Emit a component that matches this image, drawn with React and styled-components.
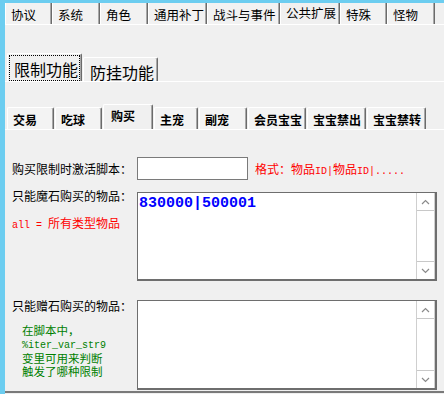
import React from 'react';
import styled, { createGlobalStyle } from 'styled-components';

const CJK = '"Noto Sans CJK SC", "Noto Sans", sans-serif';
const MONO = '"Liberation Mono", "Noto Sans CJK SC", monospace';

const GlobalStyle = createGlobalStyle`
  html, body {
    margin: 0;
    padding: 0;
    background: #f0f0f0;
  }
  body {
    font-family: ${CJK};
    font-size: 12px;
    color: #000;
  }
`;

const Frame = styled.div`
  width: 444px;
  height: 394px;
  box-sizing: border-box;
  padding: 3px 0 0 5px;
  background: #6ccdf0;
  display: flex;
  overflow: hidden;
`;

const Panel = styled.div`
  flex: 1;
  display: flex;
  flex-direction: column;
  background: #f0f0f0;
`;

/* ---------- tab strips ---------- */

const TopStrip = styled.div`
  display: flex;
  height: 21px;
  border-bottom: 1px solid #ffffff;
`;

const TopTab = styled.div`
  width: ${p => p.$w}px;
  box-sizing: border-box;
  height: 21px;
  padding: ${p => (p.$active ? '3px' : '5px')} 0 0 5px;
  line-height: 13px;
  font-size: 12.5px;
  white-space: nowrap;
  background: ${p => (p.$active ? '#f0f0f0' : '#f2f2f2')};
  border-left: 1px solid #ffffff;
  border-right: 1px solid #6b6b6b;
  box-shadow: inset -1px 0 #a8a8a8;
`;

const Strip = styled.div`
  display: flex;
  align-items: flex-end;
  gap: 1px;
  padding-left: 2px;
  margin-top: ${p => p.$top}px;
  border-bottom: 1px solid #ffffff;
`;

const BigTab = styled.div`
  width: ${p => p.$w}px;
  box-sizing: border-box;
  height: ${p => (p.$active ? 28 : 24)}px;
  padding: 1px 1px 0 1px;
  font-size: 16px;
  white-space: nowrap;
  border-left: 1px solid #ffffff;
  border-top: 1px solid #ffffff;
  border-right: 1px solid #6b6b6b;
  box-shadow: inset -1px 0 #a8a8a8;
  border-radius: 2px 2px 0 0;
`;

const FocusBox = styled.div`
  height: 100%;
  box-sizing: border-box;
  padding: ${p => (p.$active ? '3px' : '2px')} 0 0 4px;
  line-height: 20px;
  border: 1px dotted ${p => (p.$active ? '#000' : 'transparent')};
`;

const SmallTab = styled.div`
  width: ${p => p.$w}px;
  box-sizing: border-box;
  height: ${p => (p.$active ? 25 : 22)}px;
  padding: ${p => (p.$active ? '4px 0 0 7px' : '5px 0 0 5px')};
  line-height: 13px;
  font-size: 12px;
  font-weight: 700;
  white-space: nowrap;
  background: ${p => (p.$active ? '#f0f0f0' : '#f3f3f3')};
  border-left: 1px solid #ffffff;
  border-top: 1px solid #ffffff;
  border-right: 1px solid #6b6b6b;
  box-shadow: inset -1px 0 #a8a8a8;
  border-radius: 2px 2px 0 0;
`;

/* ---------- form ---------- */

const Form = styled.div`
  flex: 1;
  display: flex;
  flex-direction: column;
  padding: 27px 7px 1px 7px;
  border-bottom: 2px solid #7a7a7a;
  margin-bottom: 1px;
`;

const Row = styled.div`
  display: flex;
  align-items: ${p => (p.$center ? 'center' : 'flex-start')};
  margin-top: ${p => p.$top || 0}px;
`;

const LabelCol = styled.div`
  width: 125px;
  flex: none;
  display: flex;
  flex-direction: column;
`;

const Label = styled.div`
  line-height: 13px;
  white-space: nowrap;
  margin-top: ${p => p.$shift || 0}px;
`;

const Note = styled.div`
  color: ${p => p.$color};
  font-size: ${p => p.$size || 12}px;
  line-height: ${p => p.$lh || 13}px;
  margin-top: ${p => p.$top}px;
  padding-left: ${p => p.$indent || 0}px;
  white-space: nowrap;
`;

const Mono = styled.span`
  font-family: ${MONO};
  font-size: 10px;
`;

const Input = styled.div`
  width: 111px;
  height: 23px;
  box-sizing: border-box;
  background: #fff;
  border: 1px solid #7a7a7a;
`;

const Hint = styled.div`
  margin-left: 7px;
  color: #ff0000;
  white-space: nowrap;
`;

const Memo = styled.div`
  width: 300px;
  height: ${p => p.$h}px;
  box-sizing: border-box;
  background: #fff;
  border: 1px solid #6e6e6e;
  border-right-width: 2px;
  border-bottom-width: 2px;
  display: flex;
`;

const MemoText = styled.div`
  flex: 1;
  padding: 2px 0 0 1px;
  font-family: ${MONO};
  font-weight: 700;
  font-size: 15px;
  line-height: 18px;
  color: #0000ff;
`;

const Scroll = styled.div`
  width: 17px;
  display: flex;
  flex-direction: column;
  justify-content: space-between;
  border-left: 1px solid #cfcfcf;
  border-right: 1px solid #cfcfcf;
  background: #fff;
`;

const ArrowBtn = styled.div`
  height: 17px;
  display: flex;
  align-items: center;
  justify-content: center;
  border-top: ${p => (p.$down ? '1px solid #c8c8c8' : 'none')};
  border-bottom: ${p => (p.$down ? 'none' : '1px solid #c8c8c8')};
  background: #fff;
`;

const Chevron = ({ down }) => (
  <svg width="9" height="6" viewBox="0 0 9 6">
    <polyline
      points={down ? '1,1 4.5,4.5 8,1' : '1,5 4.5,1.5 8,5'}
      fill="none"
      stroke="#8a8a8a"
      strokeWidth="1.2"
    />
  </svg>
);

const ScrollBar = () => (
  <Scroll>
    <ArrowBtn><Chevron /></ArrowBtn>
    <ArrowBtn $down><Chevron down /></ArrowBtn>
  </Scroll>
);

const topTabs = [
  ['协议', 47], ['系统', 48], ['角色', 48], ['通用补丁', 59],
  ['战斗与事件', 73], ['公共扩展', 60], ['特殊', 47], ['怪物', 48],
];

const subTabs = [
  ['交易', 47], ['吃球', 47], ['购买', 50], ['主宠', 44],
  ['副宠', 48], ['会员宝宝', 58], ['宝宝禁出', 59], ['宝宝禁转', 59],
];

export default function App() {
  return (
    <>
      <GlobalStyle />
      <Frame>
        <Panel>
          <TopStrip>
            {topTabs.map(([t, w]) => (
              <TopTab key={t} $w={w} $active={t === '公共扩展'}>{t}</TopTab>
            ))}
          </TopStrip>

          <Strip $top={28}>
            <BigTab $w={75} $active>
              <FocusBox $active>限制功能</FocusBox>
            </BigTab>
            <BigTab $w={75}>
              <FocusBox>防挂功能</FocusBox>
            </BigTab>
          </Strip>

          <Strip $top={22}>
            {subTabs.map(([t, w]) => (
              <SmallTab key={t} $w={w} $active={t === '购买'}>{t}</SmallTab>
            ))}
          </Strip>

          <Form>
            <Row $center>
              <LabelCol>
                <Label>购买限制时激活脚本：</Label>
              </LabelCol>
              <Input />
              <Hint>格式：物品<Mono>ID|</Mono>物品<Mono>ID|.....</Mono></Hint>
            </Row>

            <Row $top={12}>
              <LabelCol>
                <Label $shift={-3}>只能魔石购买的物品：</Label>
                <Note $color="#ff0000" $top={14}>
                  <Mono>all = </Mono>所有类型物品
                </Note>
              </LabelCol>
              <Memo $h={89}>
                <MemoText>830000|500001</MemoText>
                <ScrollBar />
              </Memo>
            </Row>

            <Row $top={19}>
              <LabelCol>
                <Label $shift={-1}>只能赠石购买的物品：</Label>
                <Note $color="#008000" $top={12} $indent={10} $lh={13} $size={11.5}>
                  在脚本中，<br />
                  <Mono>%iter_var_str9</Mono><br />
                  变里可用来判断<br />
                  触发了哪种限制
                </Note>
              </LabelCol>
              <Memo $h={90}>
                <MemoText />
                <ScrollBar />
              </Memo>
            </Row>
          </Form>
        </Panel>
      </Frame>
    </>
  );
}
